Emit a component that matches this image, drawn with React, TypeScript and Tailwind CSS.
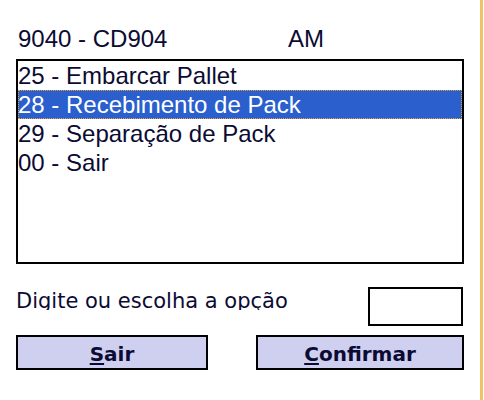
import React, { useState } from 'react';

const options = [
  { code: '25', label: 'Embarcar Pallet' },
  { code: '28', label: 'Recebimento de Pack' },
  { code: '29', label: 'Separação de Pack' },
  { code: '00', label: 'Sair' },
];

const App: React.FC = () => {
  const [selected, setSelected] = useState('28');
  const [option, setOption] = useState('');

  return (
    <div className="flex h-[400px] w-[484px] bg-white text-[#0b0b33]">
      <div className="w-[480px] pl-4 font-['Liberation_Sans',Arial,sans-serif]">
        {/* cabeçalho */}
        <div className="mt-[24px] flex h-[29px] pl-[2px] text-[24px] leading-[29px]">
          <span className="w-[270px]">9040 - CD904</span>
          <span>AM</span>
        </div>

        {/* lista de opções */}
        <div className="mt-[6px] h-[205px] w-[448px] border-2 border-black bg-white text-[24px] leading-[29px]">
          {options.map((o) => {
            const active = o.code === selected;
            return (
              <div
                key={o.code}
                onClick={() => setSelected(o.code)}
                className={
                  active
                    ? 'h-[29px] cursor-default bg-[#2a5fcd] text-white outline-1 outline-dotted outline-[#e8a030] -outline-offset-1'
                    : 'h-[29px] cursor-default'
                }
              >
                {o.code} - {o.label}
              </div>
            );
          })}
        </div>

        {/* entrada */}
        <div className="mt-[23px] flex w-[448px] items-start font-['DejaVu_Sans',Verdana,sans-serif]">
          <div className="mt-[2px] h-[21px] overflow-hidden text-[21px] leading-[24px]">
            Digite ou escolha a opção
          </div>
          <input
            value={option}
            onChange={(e) => setOption(e.target.value.replace(/\D/g, ''))}
            className="ml-auto mr-[1px] h-[39px] w-[95px] border-2 border-black bg-white px-1 text-[20px] outline-none"
          />
        </div>

        {/* botões */}
        <div className="mt-[9px] flex w-[448px] justify-between font-['DejaVu_Sans',Verdana,sans-serif] text-[20px] font-bold">
          <button className="flex h-[35px] w-[192px] items-center justify-center border-2 border-black bg-[#cfd0ef] pt-[2px] text-[#0b0b33]">
            <span>
              <span className="underline decoration-2 underline-offset-[2px]">S</span>air
            </span>
          </button>
          <button className="flex h-[35px] w-[208px] items-center justify-center border-2 border-black bg-[#cfd0ef] pt-[2px] text-[#0b0b33]">
            <span>
              <span className="underline decoration-2 underline-offset-[2px]">C</span>onfirmar
            </span>
          </button>
        </div>
      </div>
      <div className="w-[3px] bg-[#f0c466]" />
    </div>
  );
};

export default App;
